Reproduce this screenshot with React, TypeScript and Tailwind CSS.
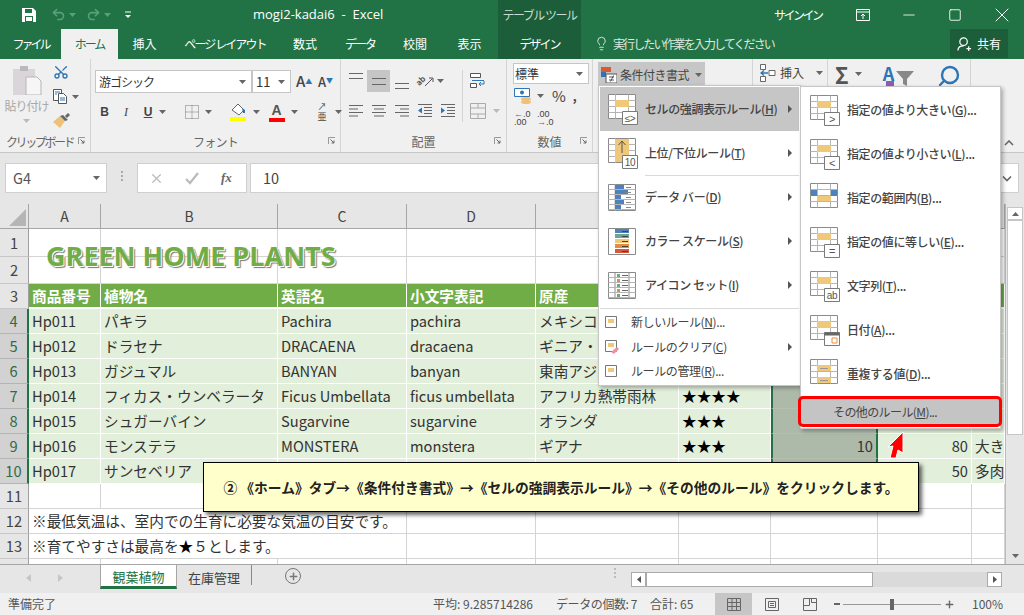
import type { ReactNode } from "react";
import { Lightbulb, Minus, Plus, Redo2, Scissors, Search, Square, Undo2, X } from "lucide-react";

const GRID_COLS = "grid grid-cols-[29px_72px_177px_129px_129px_143px_92px_107px_94px_33px]";

function Caret({ className = "fill-[#666]" }: { className?: string }) {
  return (
    <svg className={`shrink-0 ${className}`} height="4" viewBox="0 0 7 4" width="7">
      <path d="M0 0h7L3.5 4z" />
    </svg>
  );
}

function Launcher() {
  return (
    <svg className="absolute right-[4px] top-[3px]" height="8" viewBox="0 0 8 8" width="8">
      <path d="M.5 7V.5H7" fill="none" stroke="#999" />
      <path d="M2.5 2.5L6 6M6 3.5V6H3.5" fill="none" stroke="#666" />
    </svg>
  );
}

function Group({
  width,
  label,
  labelClass = "text-center",
  children,
}: {
  width: string;
  label?: string;
  labelClass?: string;
  children: ReactNode;
}) {
  return (
    <div className={`flex h-full shrink-0 flex-col border-r border-[#d4d4d4] ${width}`}>
      <div className="min-h-0 flex-1">{children}</div>
      <div className={`relative h-[18px] pb-[3px] text-[12px] leading-[15px] text-[#666] ${labelClass}`}>
        {label}
        {label ? <Launcher /> : null}
      </div>
    </div>
  );
}

function Lines({ rows, stroke = "#666" }: { rows: [number, number][]; stroke?: string }) {
  return (
    <svg height="16" viewBox="0 0 16 16" width="16">
      {rows.map(([x1, x2], i) => (
        <path d={`M${x1} ${2.5 + i * 3.5}H${x2}`} key={i} stroke={stroke} />
      ))}
    </svg>
  );
}

function VAlign({ d }: { d: string }) {
  return (
    <svg height="22" viewBox="0 0 16 22" width="16">
      <path d={d} stroke="#666" />
    </svg>
  );
}

function Slot({ w = "w-[23px]", active, children }: { w?: string; active?: boolean; children: ReactNode }) {
  return (
    <div className={`flex h-[22px] shrink-0 items-center justify-center ${w} ${active ? "bg-[#c6c6c6]" : ""}`}>
      {children}
    </div>
  );
}

function TitleBar() {
  return (
    <div className="flex h-[29px] items-center bg-[#217346] text-[12px] text-white">
      <div className="flex w-[253px] shrink-0 items-center">
        <svg className="ml-[22px]" height="14" viewBox="0 0 14 14" width="14">
          <path d="M0 0h11l3 3v11H0z" fill="#fff" />
          <path d="M3 1h7v4H3zM3 8h8v6H3z" fill="#217346" />
          <path d="M4 9h6v4H4z" fill="#fff" />
        </svg>
        <Undo2 className="ml-[15px] text-[#5c9f7c]" size={15} strokeWidth={2.5} />
        <div className="ml-[3px]">
          <Caret className="fill-[#5c9f7c]" />
        </div>
        <Redo2 className="ml-[10px] text-[#5c9f7c]" size={15} strokeWidth={2.5} />
        <div className="ml-[3px]">
          <Caret className="fill-[#5c9f7c]" />
        </div>
        <svg className="ml-[13px]" height="8" viewBox="0 0 8 8" width="8">
          <path d="M1 1h6" stroke="#fff" />
          <path d="M1 4h6L4 7z" fill="#fff" />
        </svg>
      </div>
      <div className="w-[245px] shrink-0 whitespace-pre text-[13px] tracking-normal [font-family:'Open_Sans','Liberation_Sans',sans-serif]">
        mogi2-kadai6  -  Excel
      </div>
      <div className="flex h-full w-[83px] shrink-0 items-center justify-center whitespace-nowrap bg-[#1b5e39] tracking-[-1.5px] text-[#c8dccf]">
        テーブル ツール
      </div>
      <div className="ml-[193px] w-[46px] shrink-0 whitespace-nowrap tracking-[-2.5px]">サインイン</div>
      <svg className="ml-[36px] shrink-0" height="12" viewBox="0 0 14 12" width="14">
        <path d="M.5.5h13v11H.5zM.5 3h13M7 10V5M5 7l2-2 2 2" fill="none" stroke="#fff" />
      </svg>
      <Minus className="ml-[30px] shrink-0" size={18} strokeWidth={1.1} />
      <Square className="ml-[30px] shrink-0" size={14} strokeWidth={1.5} />
      <X className="ml-[28px] shrink-0" size={24} strokeWidth={1} />
    </div>
  );
}

const TABS: [string, string][] = [
  ["ファイル", "w-[61px] tracking-[-3px]"],
  ["ホーム", "w-[57px] tracking-[-2px]"],
  ["挿入", "w-[53px]"],
  ["ページ レイアウト", "w-[108px] tracking-[-1.9px]"],
  ["数式", "w-[52px]"],
  ["データ", "w-[58px] tracking-[-2px]"],
  ["校閲", "w-[52px]"],
  ["表示", "w-[57px]"],
];

function TabBar() {
  return (
    <div className="flex h-[30px] bg-[#217346] text-[12px] text-white">
      {TABS.map(([name, width]) => (
        <div
          className={`flex shrink-0 items-center justify-center whitespace-nowrap ${width} ${name === "ホーム" ? "bg-[#f0f0f0] text-[#217346]" : ""}`}
          key={name}
        >
          {name}
        </div>
      ))}
      <div className="flex w-[83px] shrink-0 items-center justify-center bg-[#1b5e39] tracking-[-2px]">デザイン</div>
      <Lightbulb className="ml-[13px] mt-[7px] shrink-0 text-[#e3eee7]" size={15} strokeWidth={1.4} />
      <div className="ml-[4px] flex w-[160px] shrink-0 items-center whitespace-nowrap tracking-[-1.9px] text-[#dbe8e0]">
        実行したい作業を入力してください
      </div>
      <div className="ml-[177px] flex h-[29px] w-[58px] shrink-0 items-center justify-center gap-[5px] bg-[#1b5e39]">
        <svg height="16" viewBox="0 0 16 16" width="15">
          <circle cx="7" cy="5.5" fill="none" r="4" stroke="#fff" strokeWidth="1.3" />
          <path d="M1 15c0-4 3-5 6-5M10 13h5M12.5 10.5v5" fill="none" stroke="#fff" strokeWidth="1.3" />
        </svg>
        <span>共有</span>
      </div>
    </div>
  );
}

function Ribbon() {
  return (
    <div className="flex h-[94px] border-b border-[#c6c6c6] bg-[#f0f0f0] text-[12px] text-[#444]">
      <Group label="クリップボード" labelClass="pl-[6px] tracking-[-2.4px] whitespace-nowrap" width="w-[91px]">
        <div className="flex pt-[5px]">
          <div className="flex w-[53px] flex-col items-center text-[#a8a8a8]">
            <svg height="31" viewBox="0 0 30 31" width="30">
              <path d="M1 5h22v26H1z" fill="#d9d5d8" />
              <path d="M8 2h8v5H8z" fill="#bdb8bc" />
              <path d="M14 13h11l4 4v14H14z" fill="#f6f6f6" stroke="#b5b5b5" />
            </svg>
            <div className="mt-[3px] leading-[16px] tracking-[-1px]">貼り付け</div>
            <div className="mt-[5px]">
              <Caret className="fill-[#bbb]" />
            </div>
          </div>
          <div className="flex flex-col gap-[9px]">
            <Scissors className="rotate-[-90deg] text-[#2e75b6]" size={16} />
            <div className="flex items-center gap-[4px]">
              <svg height="15" viewBox="0 0 15 15" width="15">
                <path d="M.5.5h8v11h-8z" fill="#fff" stroke="#555" />
                <path d="M5.5 4.5h5l3 3v7h-8z" fill="#fff" stroke="#555" />
                <path d="M2 3h5M2 5h2M7 9h5M7 11h5" stroke="#2e75b6" />
              </svg>
              <Caret />
            </div>
            <svg height="15" viewBox="0 0 17 15" width="17">
              <path d="M0 9l7-6 5 5-5 7z" fill="#efc078" />
              <path d="M7 3l3-1 5 5-3 1z" fill="#666" />
              <path d="M12 3l3-3 2 2-3 3z" fill="#666" />
            </svg>
          </div>
        </div>
      </Group>
      <Group label="フォント" labelClass="text-center tracking-[-0.8px]" width="w-[250px]">
        <div className="pl-[4px] pt-[11px]">
          <div className="flex items-center">
            <div className="flex h-[23px] w-[157px] items-center justify-between border border-[#c6c6c6] bg-white px-[3px] pr-[5px] tracking-[-1px] text-[#333]">
              <span>游ゴシック</span>
              <Caret />
            </div>
            <div className="flex h-[23px] w-[39px] items-center justify-between border border-[#c6c6c6] bg-white px-[3px] pr-[5px] text-[13px] text-[#333]">
              <span>11</span>
              <Caret />
            </div>
            <div className="ml-[5px] w-[22px] text-[15px] font-medium">
              A<sup className="text-[7px] text-[#2e75b6]">▲</sup>
            </div>
            <div className="text-[13px] font-medium">
              A<sup className="text-[7px] text-[#2e75b6]">▼</sup>
            </div>
          </div>
          <div className="mt-[8px] flex items-center">
            <Slot w="w-[21px] ml-[-1px]">
              <span className="font-bold [font-family:'Liberation_Sans',sans-serif]">B</span>
            </Slot>
            <Slot w="w-[22px]">
              <span className="italic [font-family:'Liberation_Serif',serif]">I</span>
            </Slot>
            <Slot w="w-[22px]">
              <span className="font-bold underline [font-family:'Liberation_Sans',sans-serif]">U</span>
            </Slot>
            <Caret />
            <div className="ml-[8px] h-[22px] w-px bg-[#d4d4d4]" />
            <Slot w="w-[26px] ml-[5px]">
              <svg height="14" viewBox="0 0 14 14" width="14">
                <path d="M.5.5h13v13H.5zM7 .5v13M.5 7h13" fill="none" stroke="#777" strokeDasharray="1 1" />
              </svg>
            </Slot>
            <Caret />
            <div className="ml-[8px] h-[22px] w-px bg-[#d4d4d4]" />
            <Slot w="w-[27px] ml-[4px]">
              <svg height="20" viewBox="0 0 18 20" width="18">
                <path d="M3 8l6-6 6 6-5 5z" fill="#fff" stroke="#666" />
                <path d="M13 6l3 2v3h-2z" fill="#2e75b6" />
                <path d="M1 15h16v4H1z" fill="#ffff00" />
              </svg>
            </Slot>
            <div className="ml-[2px]">
              <Caret />
            </div>
            <Slot w="w-[27px] ml-[3px]">
              <div className="flex w-[16px] flex-col items-center">
                <span className="h-[14px] text-[14px] font-bold leading-[14px] text-[#555] [font-family:'Liberation_Sans',sans-serif]">
                  A
                </span>
                <span className="mt-[1px] h-[4px] w-[16px] bg-[#ff0000]" />
              </div>
            </Slot>
            <div className="ml-[1px]">
              <Caret />
            </div>
            <div className="ml-[8px] h-[22px] w-px bg-[#d4d4d4]" />
            <Slot w="w-[26px] ml-[3px]">
              <span className="text-[9px] leading-[10px]">
                ↗
                <br />亜
              </span>
            </Slot>
            <Caret />
          </div>
        </div>
      </Group>
      <Group label="配置" width="w-[166px]">
        <div className="flex pl-[3px] pt-[11px]">
          <div className="w-[118px] shrink-0">
            <div className="flex items-center">
              <Slot>
                <VAlign d="M1 3.500h14M1 8.500h14" />
              </Slot>
              <Slot active>
                <VAlign d="M1 8.500h14M1 14.500h14" />
              </Slot>
              <Slot>
                <VAlign d="M1 13.500h14M1 18.500h14" />
              </Slot>
              <Slot w="w-[24px]">
                <svg className="overflow-visible" height="18" viewBox="0 0 18 18" width="18">
                  <text fill="#555" fontSize="8" fontWeight="700" transform="rotate(-45 6 10)" x="1" y="11">
                    ab
                  </text>
                  <path d="M9 14l7-7M13 6h4v4" fill="none" stroke="#555" />
                </svg>
              </Slot>
              <Caret />
            </div>
            <div className="mt-[8px] flex items-center">
              <Slot>
                <Lines rows={[[1, 15], [1, 10], [1, 15], [1, 10]]} />
              </Slot>
              <Slot>
                <Lines rows={[[1, 15], [3, 13], [1, 15], [3, 13]]} />
              </Slot>
              <Slot>
                <Lines rows={[[1, 15], [6, 15], [1, 15], [6, 15]]} />
              </Slot>
              <Slot>
                <svg height="16" viewBox="0 0 16 16" width="16">
                  <path d="M7 4.500h8M7 7.500h8M7 10.500h8M1 13.500h14M1 1.500h14" stroke="#666" />
                  <path d="M1 7.500l4-3v6z" fill="#2e75b6" />
                </svg>
              </Slot>
              <Slot>
                <svg height="16" viewBox="0 0 16 16" width="16">
                  <path d="M7 4.500h8M7 7.500h8M7 10.500h8M1 13.500h14M1 1.500h14" stroke="#666" />
                  <path d="M5 7.500l-4-3v6z" fill="#2e75b6" />
                </svg>
              </Slot>
            </div>
          </div>
          <div className="h-[52px] w-px shrink-0 bg-[#d4d4d4]" />
          <div>
            <Slot w="w-[30px]">
              <svg height="16" viewBox="0 0 16 16" width="16">
                <path d="M.5 .5h10v4H.5zM.5 10.500h6v4H.5z" fill="#fff" stroke="#555" />
                <path d="M2 7.500h12M14 8v3H9M11 9l-2 2 2 2" fill="none" stroke="#2e75b6" />
              </svg>
            </Slot>
            <div className="mt-[8px] flex items-center">
              <Slot w="w-[30px]">
                <svg height="16" viewBox="0 0 16 16" width="16">
                  <path d="M.5.5h15v15H.5zM.5 5h15M.5 11h15M8 .5V5M8 11v4.500" fill="none" stroke="#aaa" />
                </svg>
              </Slot>
              <Caret className="fill-[#bbb]" />
            </div>
          </div>
        </div>
      </Group>
      <Group label="数値" width="w-[86px]">
        <div className="pl-[6px] pt-[4px]">
          <div className="flex h-[21px] w-[76px] items-center justify-between border border-[#c6c6c6] bg-white px-[1px] pr-[5px] text-[#333]">
            <span>標準</span>
            <Caret />
          </div>
          <div className="mt-[2px] flex h-[20px] items-center">
            <svg className="ml-[1px]" height="16" viewBox="0 0 17 16" width="17">
              <path d="M.5 .5h15v8H.5z" fill="#fff" stroke="#2e75b6" />
              <circle cx="8" cy="4.5" fill="#2e75b6" r="2" />
              <ellipse cx="12" cy="11" fill="#efc078" rx="5" ry="2" />
              <ellipse cx="12" cy="14" fill="#efc078" rx="5" ry="2" />
            </svg>
            <div className="ml-[6px]">
              <Caret />
            </div>
            <span className="ml-[8px] text-[15px]">%</span>
            <span className="ml-[7px] font-bold">,</span>
          </div>
          <div className="mt-[2px] flex h-[20px] items-center gap-[3px] pl-[1px] text-[9px] leading-[8px] [font-family:'Liberation_Sans',sans-serif]">
            <span className="w-[17px]">
              <span className="text-[#2e75b6]">←</span>.0
              <br />.00
            </span>
            <span className="ml-[3px] w-[17px]">
              .00
              <br />
              <span className="text-[#2e75b6]">→</span>.0
            </span>
          </div>
        </div>
      </Group>
      <Group width="w-[160px]">
        <div className="ml-[5px] mt-[3px] flex h-[25px] w-[107px] items-center gap-[3px] whitespace-nowrap bg-[#c6c6c6] pl-[3px] tracking-[-0.5px]">
          <svg className="shrink-0" height="16" viewBox="0 0 16 16" width="16">
            <path d="M0 0h10v5H0z" fill="#d9583a" />
            <path d="M0 5h5v5H0z" fill="#2e75b6" />
            <path d="M5 7h11v9H5z" fill="#fff" stroke="#555" />
            <path d="M8 10h5M8 13h5M9.5 14.5l3-6" stroke="#555" />
          </svg>
          <span>条件付き書式</span>
          <div className="ml-[3px]">
            <Caret />
          </div>
        </div>
      </Group>
      <Group width="w-[75px]">
        <div className="ml-[7px] mt-[5px] flex items-center gap-[4px]">
          <svg height="18" viewBox="0 0 16 18" width="16">
            <path d="M.5.5h5v5h-5zM.5 12.5h5v5h-5zM9 6.5h6v5H9z" fill="#fff" stroke="#666" />
            <path d="M8 9H1M4 6.5L1 9l3 2.5" fill="none" stroke="#2e75b6" strokeWidth="1.4" />
          </svg>
          <span>挿入</span>
          <div className="ml-[8px]">
            <Caret />
          </div>
        </div>
      </Group>
      <Group width="w-[143px]">
        <div className="flex items-start pl-[7px] pt-[5px]">
          <span className="text-[22px] font-bold leading-[20px] text-[#555]">Σ</span>
          <div className="ml-[6px] mt-[8px]">
            <Caret />
          </div>
          <div className="relative ml-[21px] w-[32px] text-[18px] font-bold leading-[18px] text-[#2e75b6]">
            A
            <svg className="absolute left-[13px] top-[7px]" height="15" viewBox="0 0 18 15" width="18">
              <path d="M0 0h18l-7 8v7l-4-2V8z" fill="#888" />
            </svg>
            <span className="absolute left-[3px] top-[17px] h-[6px] w-[8px] bg-[#8e5bb5]" />
          </div>
          <Search className="ml-[22px] scale-x-[-1] text-[#2e75b6]" size={24} strokeWidth={2.4} />
        </div>
      </Group>
      <div className="flex flex-1 items-end justify-end pb-[6px] pr-[10px]">
        <svg height="6" viewBox="0 0 10 6" width="10">
          <path d="M1 5l4-4 4 4" fill="none" stroke="#666" strokeWidth="1.6" />
        </svg>
      </div>
    </div>
  );
}

function FormulaBar() {
  return (
    <div className="flex h-[51px] items-start bg-[#e6e6e6] pl-[5px] pt-[10px] text-[#555]">
      <div className="flex h-[30px] w-[102px] items-center justify-between border border-[#cfcfcf] bg-white pl-[7px] pr-[6px] text-[14.5px]">
        <span>G4</span>
        <Caret />
      </div>
      <div className="ml-[14px] mt-[8px] flex h-[12px] w-[16px] flex-col gap-[2px]">
        <span className="h-[2px] w-[2px] bg-[#aaa]" />
        <span className="h-[2px] w-[2px] bg-[#aaa]" />
        <span className="h-[2px] w-[2px] bg-[#aaa]" />
      </div>
      <div className="flex h-[30px] w-[110px] items-center border border-[#cfcfcf] bg-white text-[#bbb]">
        <X className="ml-[11px]" size={15} strokeWidth={2} />
        <svg className="ml-[21px]" height="13" viewBox="0 0 14 13" width="14">
          <path d="M1 7l4 4 8-10" fill="none" stroke="#bbb" strokeWidth="2.2" />
        </svg>
        <span className="ml-[22px] text-[13px] font-bold italic text-[#666] [font-family:'Liberation_Serif',serif]">
          fx
        </span>
      </div>
      <div className="ml-[3px] flex h-[30px] w-[769px] items-center justify-between border border-[#cfcfcf] bg-white pl-[12px] pr-[6px] text-[14.5px] text-[#444]">
        <span>10</span>
        <svg height="7" viewBox="0 0 10 6" width="10">
          <path d="M1 1l4 4 4-4" fill="none" stroke="#666" strokeWidth="1.6" />
        </svg>
      </div>
    </div>
  );
}

type Row = {
  no: number;
  cells?: string[];
};

// F4:F6 and everything right of them sit under the open menus
const ROWS: Row[] = [
  { no: 1 },
  { no: 2 },
  { no: 3, cells: ["商品番号", "植物名", "英語名", "小文字表記", "原産", "", "", "", ""] },
  { no: 4, cells: ["Hp011", "パキラ", "Pachira", "pachira", "メキシコ", "", "", "", ""] },
  { no: 5, cells: ["Hp012", "ドラセナ", "DRACAENA", "dracaena", "ギニア・", "", "", "", ""] },
  { no: 6, cells: ["Hp013", "ガジュマル", "BANYAN", "banyan", "東南アジ", "", "", "", ""] },
  { no: 7, cells: ["Hp014", "フィカス・ウンベラータ", "Ficus Umbellata", "ficus umbellata", "アフリカ熱帯雨林", "★★★★", "", "", ""] },
  { no: 8, cells: ["Hp015", "シュガーバイン", "Sugarvine", "sugarvine", "オランダ", "★★★", "", "", ""] },
  { no: 9, cells: ["Hp016", "モンステラ", "MONSTERA", "monstera", "ギアナ", "★★★", "10", "80", "大き"] },
  { no: 10, cells: ["Hp017", "サンセベリア", "", "", "", "", "", "50", "多肉"] },
];

const rowHeight = (no: number) => (no === 1 ? "h-[28px]" : no === 2 ? "h-[27px]" : "h-[25px]");

function RowHead({ no, active }: { no: number; active?: boolean }) {
  return (
    <div
      className={`flex items-center justify-center border-b text-[14.67px] ${rowHeight(no)} ${
        active
          ? "border-b-[#b5b5b5] border-r-2 border-r-[#217346] bg-[#d2d2d2] text-[#2f6b4a]"
          : "border-b-[#c6c6c6] border-r border-r-[#9f9f9f] bg-[#e6e6e6] text-[#444]"
      }`}
    >
      {no === 14 ? null : no}
    </div>
  );
}

function TableRow({ row }: { row: Row }) {
  const { no, cells } = row;
  if (!cells) {
    return (
      <>
        <RowHead no={no} />
        {Array.from({ length: 9 }, (_, i) => (
          <div className={`border-b border-r border-[#d4d4d4] ${rowHeight(no)}`} key={i} />
        ))}
      </>
    );
  }
  if (no === 3) {
    return (
      <>
        <RowHead no={no} />
        {cells.map((text, i) => (
          <div
            className="flex h-[25px] items-center overflow-hidden whitespace-nowrap border-b-2 border-r border-white bg-[#70ad47] pl-[3px] text-[14.67px] font-bold text-white"
            key={i}
          >
            {text}
          </div>
        ))}
      </>
    );
  }
  return (
    <>
      <RowHead active no={no} />
      {cells.map((text, i) => {
        const numeric = i === 6 || i === 7;
        const selected = i === 6;
        return (
          <div
            className={`flex h-[25px] items-center overflow-hidden whitespace-nowrap border-b text-[14.67px] ${
              numeric ? "justify-end pr-[3px]" : "pl-[3px]"
            } ${
              selected
                ? "border-x-2 border-b-[#b4bfae] border-x-[#217346] bg-[#adb9a9]"
                : "border-r border-white bg-[#e2efda]"
            } ${i === 5 ? "text-black" : "text-[#333]"}`}
            key={i}
          >
            {text}
          </div>
        );
      })}
    </>
  );
}

function NoteRow({ no, text }: { no: number; text: ReactNode }) {
  return (
    <>
      <RowHead no={no} />
      <div className="col-span-3 flex h-[25px] items-center whitespace-nowrap border-b border-r border-[#d4d4d4] pl-[3px] text-[14.67px] text-[#333]">
        {text}
      </div>
      {Array.from({ length: 6 }, (_, i) => (
        <div className="h-[25px] border-b border-r border-[#d4d4d4]" key={i} />
      ))}
    </>
  );
}

function Sheet() {
  return (
    <div className="relative flex h-[361px] overflow-hidden border-b border-[#a6a6a6] bg-white">
      <div className="w-[1005px] shrink-0">
        <div className={`${GRID_COLS} h-[25px] bg-[#e6e6e6] text-[14px] text-[#444]`}>
          <div className="flex items-end justify-end border-b border-r border-[#a6a6a6] p-[2px]">
            <div className="h-0 w-0 border-b-[17px] border-l-[17px] border-b-[#b5b5b5] border-l-transparent" />
          </div>
          {["A", "B", "C", "D", "E", "", "", "", ""].map((col, i) => (
            <div className="flex items-center justify-center border-b border-r border-[#a6a6a6]" key={i}>
              {col}
            </div>
          ))}
        </div>
        <div className={GRID_COLS}>
          {ROWS.map((row) => (
            <TableRow key={row.no} row={row} />
          ))}
          <TableRow row={{ no: 11 }} />
          <NoteRow no={12} text="※最低気温は、室内での生育に必要な気温の目安です。" />
          <NoteRow
            no={13}
            text={
              <>
                ※育てやすさは最高を<span className="text-black">★</span>５とします。
              </>
            }
          />
          <TableRow row={{ no: 14 }} />
        </div>
      </div>
      <div className="flex flex-1 flex-col items-center border-l border-[#bbb] bg-[#e6e6e6] px-[1px] pt-[3px]">
        <div className="flex h-[13px] w-full items-center justify-center border border-[#c6c6c6] bg-white">
          <svg height="4" viewBox="0 0 7 4" width="7">
            <path d="M3.5 0L7 4H0z" fill="#666" />
          </svg>
        </div>
        <div className="h-[215px] w-full border border-[#c6c6c6] bg-white" />
        <div className="mt-auto mb-[2px] flex h-[13px] w-full items-center justify-center">
          <Caret />
        </div>
      </div>
      <div className="pointer-events-none absolute left-[46px] top-[35px] whitespace-nowrap text-[27px] font-bold leading-[34px] text-[#70ad47] [font-family:'Open_Sans',sans-serif] [text-shadow:1px_1px_0_#fff,2px_2px_1px_#777]">
        GREEN HOME PLANTS
      </div>
    </div>
  );
}

function SheetTabs() {
  return (
    <div className="flex h-[28px] items-start bg-[#e6e6e6] text-[13px] text-[#444]">
      <svg className="ml-[26px] mt-[9px]" height="8" viewBox="0 0 5 8" width="5">
        <path d="M5 0v8L0 4z" fill="#c6c6c6" />
      </svg>
      <svg className="ml-[27px] mt-[9px]" height="8" viewBox="0 0 5 8" width="5">
        <path d="M0 0v8l5-4z" fill="#c6c6c6" />
      </svg>
      <div className="ml-[37px] flex h-[24px] w-[77px] shrink-0 items-center justify-center border-x border-[#a6a6a6] border-b-[3px] border-b-[#217346] bg-white pt-[2px] text-[#217346]">
        観葉植物
      </div>
      <div className="flex h-[24px] w-[74px] shrink-0 items-center justify-center pt-[2px]">在庫管理</div>
      <div className="h-[20px] w-px bg-[#888]" />
      <div className="ml-[33px] mt-[3px] flex h-[16px] w-[16px] items-center justify-center rounded-full border border-[#777]">
        <Plus className="text-[#777]" size={11} strokeWidth={3} />
      </div>
      <div className="ml-[313px] mt-[3px] flex h-[12px] flex-col gap-[2px]">
        <span className="h-[2px] w-[2px] bg-[#bbb]" />
        <span className="h-[2px] w-[2px] bg-[#bbb]" />
        <span className="h-[2px] w-[2px] bg-[#bbb]" />
      </div>
      <div className="ml-[15px] mt-[7px] flex h-[15px] w-[371px] bg-[#dadada]">
        <div className="flex w-[15px] items-center justify-center border border-[#aaa] bg-white">
          <svg height="7" viewBox="0 0 4 7" width="4">
            <path d="M4 0v7L0 3.5z" fill="#555" />
          </svg>
        </div>
        <div className="w-[227px] border border-[#aaa] bg-white" />
        <div className="ml-auto flex w-[15px] items-center justify-center border border-[#aaa] bg-white">
          <svg height="7" viewBox="0 0 4 7" width="4">
            <path d="M0 0v7l4-3.5z" fill="#555" />
          </svg>
        </div>
      </div>
    </div>
  );
}

function StatusBar() {
  return (
    <div className="flex h-[22px] items-center whitespace-nowrap bg-[#f0f0f0] pl-[8px] text-[12px] text-[#555]">
      <span className="w-[48px] shrink-0">準備完了</span>
      <span className="ml-[377px] w-[123px] shrink-0">平均: 9.285714286</span>
      <span className="w-[94px] shrink-0 tracking-[-0.4px]">データの個数: 7</span>
      <span className="w-[65px] shrink-0">合計: 65</span>
      <div className="flex h-full w-[37px] shrink-0 items-center justify-center bg-[#c6c6c6]">
        <svg height="13" viewBox="0 0 14 13" width="14">
          <path d="M.5.5h13v12H.5zM.5 4.5h13M.5 8.5h13M5 .5v12M9.5 .5v12" fill="none" stroke="#666" />
        </svg>
      </div>
      <svg className="ml-[13px] shrink-0" height="13" viewBox="0 0 14 13" width="14">
        <path d="M.5.5h13v12H.5zM3.5 3.5h7v6h-7zM5 5.500h4M5 7.500h4" fill="none" stroke="#666" />
      </svg>
      <svg className="ml-[24px] shrink-0" height="13" viewBox="0 0 14 13" width="14">
        <path d="M.5.5h13v12H.5zM.5 7.500h6V.5M8.500 .5v4h5" fill="none" stroke="#666" />
      </svg>
      <div className="ml-[17px] h-[2px] w-[6px] shrink-0 bg-[#666]" />
      <div className="relative ml-[3px] h-px w-[98px] shrink-0 bg-[#999]">
        <div className="absolute left-[47px] top-[-5px] h-[11px] w-[4px] bg-[#666]" />
      </div>
      <Plus className="ml-[3px] shrink-0 text-[#666]" size={11} strokeWidth={3} />
      <span className="ml-[17px] shrink-0">100%</span>
    </div>
  );
}

function RuleGrid({ children, badge }: { children?: ReactNode; badge?: ReactNode }) {
  return (
    <svg className="shrink-0" height="31" viewBox="0 0 30 31" width="30">
      <path d="M.5.5h27v24H.5z" fill="#fff" stroke="#8a8a8a" />
      <path d="M7.500 .5v24M20.500 .5v24M.5 6.500h27M.5 12.500h27M.5 18.500h27" fill="none" stroke="#b5b5b5" />
      {children}
      {badge}
    </svg>
  );
}

function Badge({ label, size = 10 }: { label: string; size?: number }) {
  return (
    <>
      <path d="M14.500 17.500h15v13h-15z" fill="#fff" stroke="#7a7a7a" />
      <text fill="#555" fontFamily="Liberation Sans, sans-serif" fontSize={size} textAnchor="middle" x="22" y="27.500">
        {label}
      </text>
    </>
  );
}

const HIGHLIGHT = <path d="M7 6h14v7H7z" fill="#f0c87a" />;

function BarIcon() {
  const widths = [9, 13, 6, 9, 6];
  return (
    <svg className="shrink-0" height="27" viewBox="0 0 28 27" width="28">
      <path d="M.5.5h27v26H.5z" fill="#fff" stroke="#8a8a8a" />
      <path d="M7 .5v26" stroke="#b5b5b5" />
      {widths.map((w, i) => (
        <g key={i}>
          <path d={`M7 ${1 + i * 5}h${w}v4H7z`} fill="#4f81bd" />
          <path d={`M18 ${3.5 + i * 5}h5`} stroke="#888" />
          <path d={`M.5 ${5.5 + i * 5}h27`} stroke="#b5b5b5" />
        </g>
      ))}
    </svg>
  );
}

function ScaleIcon() {
  const colors = ["#4f81bd", "#6fa58c", "#f0c87a", "#e98b3d", "#d9583a"];
  return (
    <svg className="shrink-0" height="27" viewBox="0 0 28 27" width="28">
      <path d="M.5.5h27v26H.5z" fill="#fff" stroke="#8a8a8a" />
      {colors.map((c, i) => (
        <g key={c}>
          <path d={`M7 ${1 + i * 5}h14v4H7z`} fill={c} />
          <path d={`M14 ${3.5 + i * 5}h6`} stroke="#444" />
        </g>
      ))}
    </svg>
  );
}

function SetIcon() {
  const colors = ["#6fa58c", "#e98b3d", "#6fa58c", "#e98b3d", "#6fa58c"];
  return (
    <svg className="shrink-0" height="27" viewBox="0 0 28 27" width="28">
      <path d="M.5.5h27v26H.5zM7 .5v26M21 .5v26" fill="#fff" stroke="#8a8a8a" />
      {colors.map((c, i) => (
        <g key={i}>
          <path d={`M.5 ${5.5 + i * 5}h27`} stroke="#b5b5b5" />
          <path d={`M9 ${2 + i * 5}h3v3H9z`} fill={c} />
          <path d={`M14 ${3.5 + i * 5}h6`} stroke="#666" />
        </g>
      ))}
    </svg>
  );
}

function SmallIcon({ children }: { children?: ReactNode }) {
  return (
    <svg className="shrink-0" height="15" viewBox="0 0 16 15" width="16">
      <path d="M2.500 1.500h11v11h-11z" fill="#fff" stroke="#777" />
      <path d="M5 4h6v4H5z" fill="#f0c87a" />
      {children}
    </svg>
  );
}

function MenuItem({
  icon,
  label,
  mnemonic,
  tail = "",
  arrow,
  active,
  h = "h-[44px] pl-[8px]",
  gap = "w-[37px]",
}: {
  icon: ReactNode;
  label: string;
  mnemonic: string;
  tail?: string;
  arrow?: boolean;
  active?: boolean;
  h?: string;
  gap?: string;
}) {
  return (
    <div className={`flex items-center whitespace-nowrap pr-[7px] ${h} ${active ? "bg-[#c6c6c6]" : ""}`}>
      <div className={`flex shrink-0 ${gap}`}>{icon}</div>
      <span>
        {label}(<span className="underline">{mnemonic}</span>){tail}
      </span>
      {arrow ? (
        <svg className="ml-auto" height="8" viewBox="0 0 4 8" width="4">
          <path d="M0 0v8l4-4z" fill="#555" />
        </svg>
      ) : null}
    </div>
  );
}

function RulesMenu() {
  return (
    <div className="absolute left-[598px] top-[85px] w-[203px] border border-[#c6c6c6] bg-white p-px text-[12px] font-medium tracking-[-0.4px] text-[#444] shadow-[2px_2px_4px_rgba(0,0,0,0.3)]">
      <MenuItem
        active
        arrow
        icon={
          <RuleGrid badge={<Badge label="≤>" />}>
            {HIGHLIGHT}
          </RuleGrid>
        }
        label="セルの強調表示ルール"
        mnemonic="H"
      />
      <MenuItem
        arrow
        icon={
          <RuleGrid badge={<Badge label="10" />}>
            <path d="M7 1h14v23H7z" fill="#f0c87a" />
            <path d="M14 15V3M10.500 7L14 3l3.500 4" fill="none" stroke="#555" />
          </RuleGrid>
        }
        label="上位/下位ルール"
        mnemonic="T"
      />
      <div className="ml-[45px] h-px bg-[#d9d9d9]" />
      <MenuItem arrow h="h-[44px] mt-[-1px] pl-[8px]" icon={<BarIcon />} label="データ バー" mnemonic="D" />
      <MenuItem arrow icon={<ScaleIcon />} label="カラー スケール" mnemonic="S" />
      <MenuItem arrow icon={<SetIcon />} label="アイコン セット" mnemonic="I" />
      <div className="mb-[1px] mt-[1px] h-px bg-[#d9d9d9]" />
      <div className="font-normal">
        <MenuItem gap="w-[28px]" h="h-[24.5px] pl-[3px]" icon={<SmallIcon />} label="新しいルール" mnemonic="N" tail="..." />
        <MenuItem
          arrow
          gap="w-[28px]"
          h="h-[24.5px] pl-[3px]"
          icon={
            <SmallIcon>
              <path d="M8 13l6-5 2 2-5 5z" fill="#ef8fa0" />
            </SmallIcon>
          }
          label="ルールのクリア"
          mnemonic="C"
        />
        <MenuItem gap="w-[28px]" h="h-[24.5px] pl-[3px]" icon={<SmallIcon />} label="ルールの管理" mnemonic="R" tail="..." />
      </div>
    </div>
  );
}

function SubMenu() {
  return (
    <div className="absolute left-[800px] top-[86px] w-[201px] border border-[#c6c6c6] bg-white p-px text-[12px] font-medium tracking-[-0.4px] text-[#444] shadow-[2px_2px_4px_rgba(0,0,0,0.3)]">
      <MenuItem icon={<RuleGrid badge={<Badge label=">" size={11} />}>{HIGHLIGHT}</RuleGrid>} label="指定の値より大きい" mnemonic="G" tail="..." />
      <MenuItem icon={<RuleGrid badge={<Badge label="<" size={11} />}>{HIGHLIGHT}</RuleGrid>} label="指定の値より小さい" mnemonic="L" tail="..." />
      <MenuItem
        icon={
          <RuleGrid>
            <path d="M1 7h6v6H1zM21 7h6v6h-6z" fill="#4f81bd" />
            <path d="M7 13h14v5H7z" fill="#f0c87a" />
          </RuleGrid>
        }
        label="指定の範囲内"
        mnemonic="B"
        tail="..."
      />
      <MenuItem icon={<RuleGrid badge={<Badge label="=" size={11} />}>{HIGHLIGHT}</RuleGrid>} label="指定の値に等しい" mnemonic="E" tail="..." />
      <MenuItem icon={<RuleGrid badge={<Badge label="ab" />}>{HIGHLIGHT}</RuleGrid>} label="文字列" mnemonic="T" tail="..." />
      <MenuItem
        icon={
          <RuleGrid
            badge={
              <>
                <path d="M14.500 17.500h15v13h-15z" fill="#fff" stroke="#7a7a7a" />
                <path d="M14.500 17.500h15v3h-15z" fill="#666" />
                <path d="M22 23h5v5h-5z" fill="#fff" stroke="#e98b3d" />
              </>
            }
          >
            {HIGHLIGHT}
          </RuleGrid>
        }
        label="日付"
        mnemonic="A"
        tail="..."
      />
      <MenuItem
        icon={
          <RuleGrid>
            <path d="M7 6h14v6H7zM7 18h14v6H7z" fill="#f0c87a" />
            <path d="M10 9.500h8M10 21.500h8" stroke="#999" />
          </RuleGrid>
        }
        label="重複する値"
        mnemonic="D"
        tail="..."
      />
      <div className="h-[31px]" />
    </div>
  );
}

export default function App() {
  return (
    <div className="relative h-[615px] w-[1024px] overflow-hidden bg-white [font-family:'Noto_Sans_CJK_JP','Noto_Sans',sans-serif]">
      <TitleBar />
      <TabBar />
      <Ribbon />
      <FormulaBar />
      <Sheet />
      <SheetTabs />
      <StatusBar />

      <RulesMenu />
      <SubMenu />
      <div className="absolute left-[798px] top-[396px] flex h-[31px] w-[204px] items-center rounded-[5px] border-[3px] border-[#ff0000] bg-[#c4c4c4] pl-[32px] text-[12px] tracking-[-0.6px] text-[#444]">
        その他のルール(<span className="underline">M</span>)...
      </div>
      <svg className="absolute left-[880px] top-[425px]" height="38" viewBox="0 0 30 38" width="30">
        <path
          d="M23 7v21l-5-3-2 8h-6l3-12-5 1z"
          fill="#ff0000"
          stroke="#fff"
          strokeLinejoin="round"
          strokeWidth="1"
        />
      </svg>
      <div className="absolute left-[203px] top-[462px] flex h-[50px] w-[716px] items-center justify-center whitespace-nowrap border border-black bg-[#ffffcc] text-[13.75px] font-bold text-[#222] shadow-[3px_3px_4px_rgba(0,0,0,0.6)]">
        ② 《ホーム》タブ→《条件付き書式》→《セルの強調表示ルール》→《その他のルール》をクリックします。
      </div>
    </div>
  );
}
